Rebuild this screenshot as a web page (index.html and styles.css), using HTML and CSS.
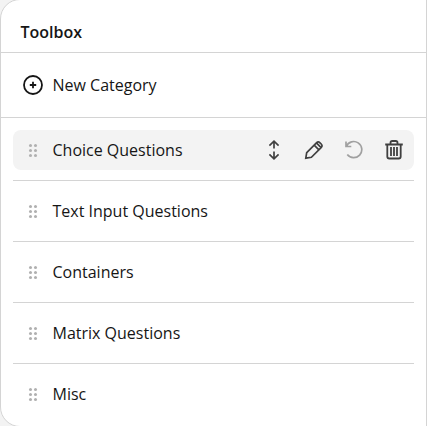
FILE: index.html
```html
<!DOCTYPE html>
<html lang="en">
<head>
<meta charset="utf-8">
<title>Toolbox</title>
<link rel="stylesheet" href="styles.css">
</head>
<body>
<svg class="defs" width="0" height="0">
  <symbol id="drag" viewBox="0 0 20 20"><g fill="#b0b0b0"><circle cx="7.5" cy="5.5" r="1.5"/><circle cx="12.5" cy="5.5" r="1.5"/><circle cx="7.5" cy="10.5" r="1.5"/><circle cx="12.5" cy="10.5" r="1.5"/><circle cx="7.5" cy="15.5" r="1.5"/><circle cx="12.5" cy="15.5" r="1.5"/></g></symbol>
</svg>
<main class="panel">
  <h1 class="title">Toolbox</h1>
  <div class="new-category">
    <svg class="icon" viewBox="0 0 20 20" fill="none" stroke="#161616" stroke-width="1.8"><circle cx="10" cy="10" r="9"/><path d="M6.8 10h6.4M10 6.8v6.4"/></svg>
    <span>New Category</span>
  </div>
  <ul class="list">
    <li class="item"><div class="row active">
      <svg class="icon"><use href="#drag"/></svg><span>Choice Questions</span>
      <div class="actions">
        <svg class="icon" viewBox="0 0 20 20"><path d="M10 1.2v7.3M10 11.5v7.3M5.4 5.6 10 1.2l4.6 4.4M5.4 14.4 10 18.8l4.6-4.4"/></svg>
        <svg class="icon" viewBox="0 0 20 20"><path d="M1.8 18.2 2.7 12.6 12.4 2.9Q14.2 1.1 16 2.8L17.2 4Q18.9 5.8 17.1 7.6L7.4 17.3ZM10.2 5.1l4.7 4.7M12.4 2.9l4.7 4.7"/></svg>
        <svg class="icon disabled" viewBox="0 0 20 20"><path d="M2 1.5v5h5.3M2.3 6.3A8.1 8.1 0 1 1 3.3 14.6"/></svg>
        <svg class="icon trash" viewBox="0 0 20 20"><path d="M1.2 4.5h17.6M6.5 4.5V2.7Q6.5 1 8.2 1h3.6q1.7 0 1.7 1.7v1.8M3.3 4.5v12q0 2 2 2h9.4q2 0 2-2v-12M7 7v9M10 7v9M13 7v9"/></svg>
      </div>
    </div></li>
    <li class="item"><div class="row"><svg class="icon"><use href="#drag"/></svg><span>Text Input Questions</span></div></li>
    <li class="item"><div class="row"><svg class="icon"><use href="#drag"/></svg><span>Containers</span></div></li>
    <li class="item"><div class="row"><svg class="icon"><use href="#drag"/></svg><span>Matrix Questions</span></div></li>
    <li class="item"><div class="row"><svg class="icon"><use href="#drag"/></svg><span>Misc</span></div></li>
  </ul>
</main>
</body>
</html>
```
FILE: styles.css
```css
* { box-sizing: border-box; }
body {
  margin: 0;
  height: 426px;
  overflow: hidden;
  background: #f3f3f3;
  color: #161616;
  font: 16px/24px "Open Sans", sans-serif;
}
.defs { display: block; }
.panel {
  height: 428px;
  margin-top: -1px;
  background: #fff;
  border: 1px solid #d4d4d4;
  border-radius: 20px 0 0 20px;
  overflow: hidden;
}
.title {
  height: 53px;
  margin: 0;
  padding: 20px 19.5px 8px;
  border-bottom: 1px solid #d4d4d4;
  font-size: 16px;
  font-weight: 600;
  line-height: 24px;
}
.new-category {
  display: flex;
  align-items: center;
  gap: 9.5px;
  height: 65px;
  padding-left: 22px;
  border-bottom: 1px solid #d4d4d4;
}
.list {
  margin: 0;
  padding: 2px 12px 0;
  list-style: none;
}
.item {
  height: 61px;
  padding: 10px 0;
  border-bottom: 1px solid #d4d4d4;
}
.item:last-child { border-bottom: 0; }
.row {
  display: flex;
  align-items: center;
  gap: 9.5px;
  height: 40px;
  padding: 0 10px;
  border-radius: 8px;
}
.row.active { background: #f3f3f3; }
.icon {
  flex: none;
  width: 20px;
  height: 20px;
}
.actions {
  display: flex;
  gap: 20px;
  margin-left: auto;
}
.actions .icon {
  fill: none;
  stroke: #404040;
  stroke-width: 1.7;
}
.actions .disabled { stroke: #a0a0a0; }
.actions .trash { stroke-width: 1.8; }
```
